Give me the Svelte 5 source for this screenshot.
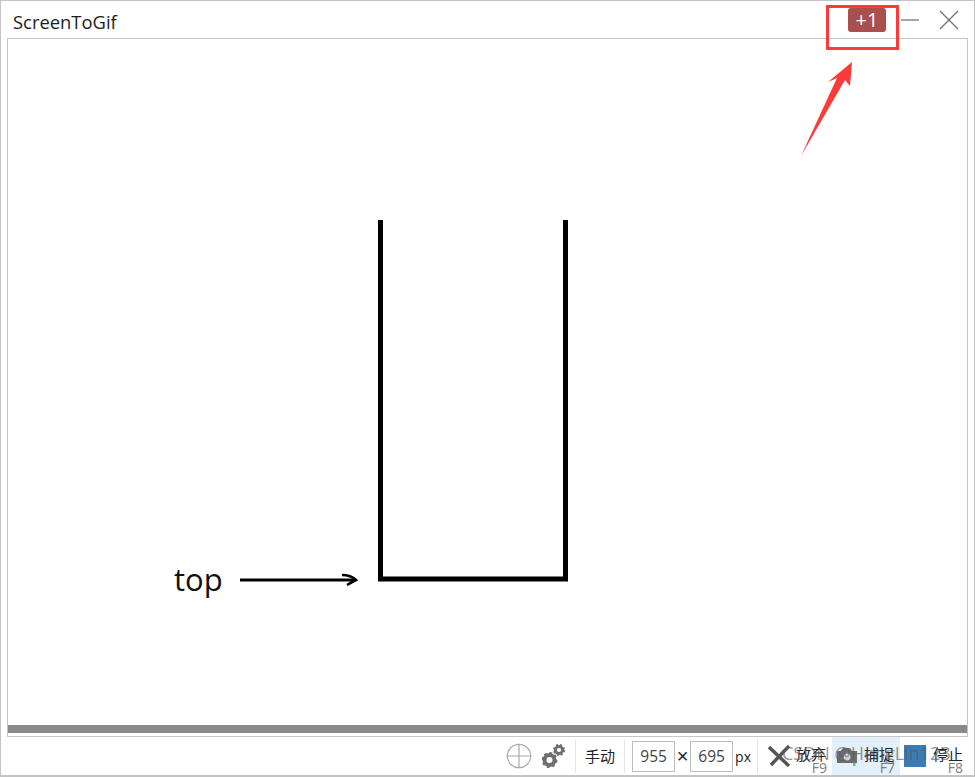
<script>
  const title = 'ScreenToGif';
</script>

<div class="window">
  <header class="titlebar">
    <span class="title">{title}</span>
    <div class="caption">
      <span class="badge">+1</span>
      <svg class="min" width="20" height="4" viewBox="0 0 20 4"><rect x="0" y="1" width="18" height="2" fill="#a6a6a6" /></svg>
      <svg class="close" width="20" height="20" viewBox="0 0 20 20"><path d="M1 1 L19 19 M19 1 L1 19" stroke="#6e6e6e" stroke-width="1.2" fill="none" /></svg>
    </div>
  </header>

  <main class="frame">
    <div class="stage">
      <svg class="drawing" width="960" height="686" viewBox="8 39 960 686">
        <path d="M380.5 220 V579 H565.5 V220" fill="none" stroke="#000" stroke-width="5" />
        <path d="M240 580 H355" fill="none" stroke="#000" stroke-width="3" />
        <path d="M342 575 Q351 575 356 580 Q352 582 347 585" fill="none" stroke="#000" stroke-width="2.6" />
        <text x="174" y="591" class="top">top</text>
      </svg>
    </div>
    <div class="progress"></div>
  </main>

  <footer class="status">
    <svg class="cross" width="26" height="26" viewBox="0 0 26 26"><circle cx="13" cy="13" r="11.7" fill="none" stroke="#a9a9a9" stroke-width="1.2" /><path d="M1 13 H25 M13 1 V25" stroke="#a9a9a9" stroke-width="1.2" /></svg>
    <svg class="gears" width="24" height="26" viewBox="0 0 24 26">
      <circle cx="7.5" cy="17" r="5" fill="none" stroke="#6f6f6f" stroke-width="4" />
      <circle cx="7.5" cy="17" r="6.7" fill="none" stroke="#6f6f6f" stroke-width="2.6" stroke-dasharray="2.6 2.6" />
      <circle cx="17" cy="7" r="3.6" fill="none" stroke="#6f6f6f" stroke-width="3" />
      <circle cx="17" cy="7" r="5" fill="none" stroke="#6f6f6f" stroke-width="2" stroke-dasharray="2 2" />
    </svg>
    <span class="sep"></span>
    <span class="label manual">手动</span>
    <span class="sep"></span>
    <span class="field">955</span>
    <span class="times">×</span>
    <span class="field">695</span>
    <span class="unit">px</span>
    <span class="sep"></span>
    <div class="action discard">
      <svg width="26" height="22" viewBox="0 0 26 22"><path d="M1 2 L21 21 M21 1 L3 20" stroke="#555" stroke-width="3.4" fill="none" /></svg>
      <span class="label">放弃</span>
      <span class="key">F9</span>
    </div>
    <div class="action capture">
      <svg width="24" height="22" viewBox="0 0 24 22"><path d="M2 6 H6 L8 3 H15 L17 6 H22 V18 H2 Z" fill="#6d6d6d" /><circle cx="12" cy="12" r="3.4" fill="#c9d3da" /><rect x="18" y="18" width="2.5" height="3" fill="#6fb98a" /></svg>
      <span class="label">捕捉</span>
      <span class="key">F7</span>
    </div>
    <div class="action stop">
      <span class="square"></span>
      <span class="label">停止</span>
      <span class="key">F8</span>
    </div>
    <span class="watermark">CSDN @HengLin123</span>
  </footer>

  <div class="annotation">
    <div class="redbox"></div>
    <svg class="arrow" width="60" height="100" viewBox="0 0 60 100"><path d="M1 96 L37 18 L28 22 L52 2 L50 26 L45 20 Z" fill="#fb3a3a" /></svg>
  </div>
</div>

<style>
  :global(body) {
    margin: 0;
    background: #fff;
  }
  .window {
    position: relative;
    box-sizing: border-box;
    width: 975px;
    height: 777px;
    border: 1px solid #c3c3c3;
    border-bottom-width: 2px;
    background: #fff;
    padding: 0 6px;
    display: flex;
    flex-direction: column;
    font-family: "Noto Sans CJK SC", "Noto Sans", sans-serif;
    overflow: hidden;
  }
  .titlebar {
    height: 37px;
    flex: none;
    display: flex;
    align-items: center;
    justify-content: space-between;
    padding-left: 6px;
  }
  .title {
    font-family: "Open Sans", "Noto Sans", sans-serif;
    font-size: 18.4px;
    color: #1c1c1c;
    margin-top: 3px;
  }
  .caption {
    display: flex;
    align-items: center;
    margin-top: 1px;
    padding-right: 9px;
  }
  .badge {
    width: 38px;
    height: 24px;
    border-radius: 3px;
    background: #a94f4f;
    color: #fff;
    font-family: "Open Sans", sans-serif;
    font-size: 20px;
    line-height: 24px;
    text-align: center;
    margin-right: 15px;
  }
  .min {
    margin-right: 18px;
  }
  .frame {
    flex: 1;
    display: flex;
    flex-direction: column;
    border: 1px solid #c6c6c6;
    min-height: 0;
  }
  .stage {
    flex: 1;
    min-height: 0;
    overflow: hidden;
  }
  .drawing {
    display: block;
  }
  .top {
    font-family: "Open Sans", sans-serif;
    font-size: 31px;
    fill: #111;
  }
  .progress {
    height: 8px;
    flex: none;
    background: #8a8a8a;
    margin-bottom: 3px;
  }
  .status {
    height: 38px;
    flex: none;
    display: flex;
    align-items: center;
    justify-content: flex-end;
    position: relative;
    font-size: 15px;
    color: #222;
  }
  .cross {
    margin-right: 10px;
  }
  .gears {
    margin-right: 9px;
  }
  .sep {
    width: 1px;
    height: 34px;
    background: #e3e6e9;
    flex: none;
  }
  .label {
    font-size: 15px;
    line-height: 18px;
    margin-top: -5px;
  }
  .manual {
    margin: 0 9px;
  }
  .field {
    box-sizing: border-box;
    width: 43px;
    height: 31px;
    border: 1px solid #bdbdbd;
    font-family: "Open Sans", sans-serif;
    font-size: 15.5px;
    line-height: 29px;
    text-align: center;
    color: #444;
  }
  .sep + .field {
    margin-left: 7px;
  }
  .times {
    width: 15px;
    text-align: center;
    font-family: "Liberation Sans", sans-serif;
    font-size: 20px;
    line-height: 24px;
  }
  .unit {
    font-family: "Open Sans", sans-serif;
    margin: 0 6px 0 2px;
    font-size: 14px;
  }
  .action {
    position: relative;
    height: 38px;
    display: flex;
    align-items: center;
    box-sizing: border-box;
  }
  .discard {
    width: 74px;
    padding-left: 10px;
    gap: 2px;
  }
  .capture {
    width: 68px;
    background: #e3f0fa;
    padding-left: 3px;
    gap: 5px;
  }
  .stop {
    width: 68px;
    padding-left: 4px;
    gap: 7px;
  }
  .square {
    width: 22px;
    height: 22px;
    background: #3c7ab5;
    margin-top: -1px;
  }
  .key {
    position: absolute;
    right: 5px;
    bottom: 0;
    font-family: "Open Sans", sans-serif;
    font-size: 14px;
    line-height: 14px;
    color: #7d7d7d;
  }
  .watermark {
    position: absolute;
    left: 775px;
    top: 3px;
    font-family: "Open Sans", sans-serif;
    font-size: 18px;
    line-height: 26px;
    color: rgba(90, 90, 90, 0.65);
    white-space: nowrap;
  }
  .annotation {
    position: absolute;
    inset: 0;
    pointer-events: none;
  }
  .redbox {
    position: absolute;
    left: 825px;
    top: 4px;
    width: 73px;
    height: 45px;
    box-sizing: border-box;
    border: 3px solid #fb3a3a;
  }
  .arrow {
    position: absolute;
    left: 799px;
    top: 59px;
  }
</style>
